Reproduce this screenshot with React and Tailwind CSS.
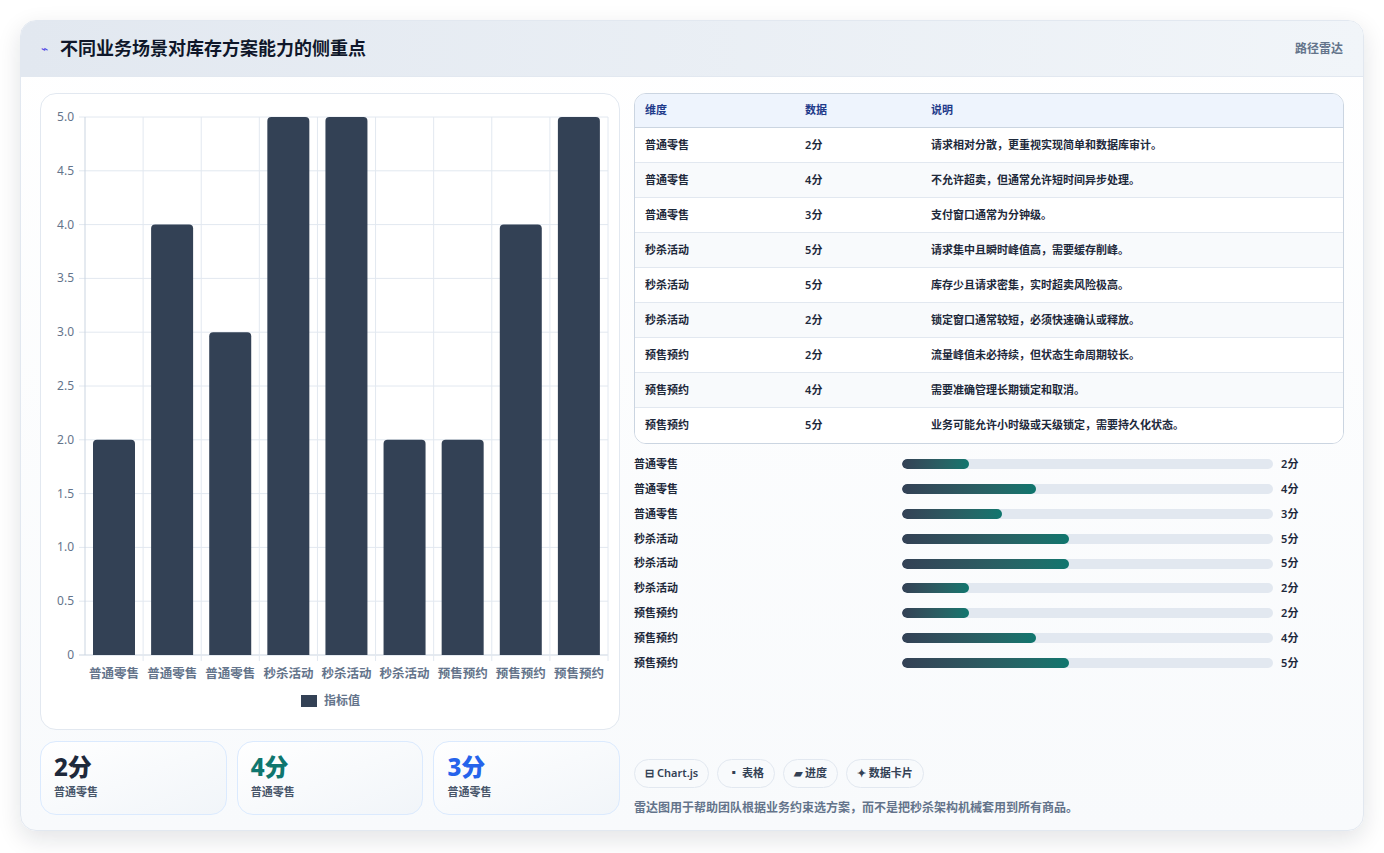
import React from "react";

const rows = [
  ["普通零售", 2, "请求相对分散，更重视实现简单和数据库审计。"],
  ["普通零售", 4, "不允许超卖，但通常允许短时间异步处理。"],
  ["普通零售", 3, "支付窗口通常为分钟级。"],
  ["秒杀活动", 5, "请求集中且瞬时峰值高，需要缓存削峰。"],
  ["秒杀活动", 5, "库存少且请求密集，实时超卖风险极高。"],
  ["秒杀活动", 2, "锁定窗口通常较短，必须快速确认或释放。"],
  ["预售预约", 2, "流量峰值未必持续，但状态生命周期较长。"],
  ["预售预约", 4, "需要准确管理长期锁定和取消。"],
  ["预售预约", 5, "业务可能允许小时级或天级锁定，需要持久化状态。"],
];

const font = { fontFamily: '"Noto Sans", "Noto Sans CJK SC", sans-serif' };

function Chart() {
  const x0 = 44, x1 = 567, yTop = 23, yZero = 561;
  const cw = (x1 - x0) / 9;
  const ticks = [0, 0.5, 1, 1.5, 2, 2.5, 3, 3.5, 4, 4.5, 5];
  return (
    <svg width="578" height="634" viewBox="0 0 578 634" style={font}>
      {ticks.map((t) => {
        const y = yZero - (t / 5) * (yZero - yTop);
        return (
          <g key={t}>
            <line x1={x0 - 6} x2={x1} y1={y} y2={y} stroke={t === 0 ? "#cbd5e1" : "#e2e8f0"} />
            <text x={x0 - 11} y={y + 4} textAnchor="end" fontSize="12" fill="#64748b">
              {t === 0 ? "0" : t.toFixed(1)}
            </text>
          </g>
        );
      })}
      {Array.from({ length: 10 }).map((_, i) => (
        <line key={i} x1={x0 + i * cw} x2={x0 + i * cw} y1={yTop} y2={yZero + (i === 0 ? 0 : 6)} stroke={i === 0 ? "#cbd5e1" : "#e2e8f0"} />
      ))}
      {rows.map((r, i) => {
        const h = (r[1] / 5) * (yZero - yTop);
        const bx = x0 + i * cw + 8;
        return (
          <g key={i}>
            <path d={`M${bx} ${yZero} V${yZero - h + 4} Q${bx} ${yZero - h} ${bx + 4} ${yZero - h} H${bx + 38} Q${bx + 42} ${yZero - h} ${bx + 42} ${yZero - h + 4} V${yZero} Z`} fill="#334155" />
            <text x={x0 + i * cw + cw / 2} y={584} textAnchor="middle" fontSize="12.5" fontWeight="600" fill="#64748b">{r[0]}</text>
          </g>
        );
      })}
      <rect x="260" y="601" width="16" height="12" fill="#334155" />
      <text x="283" y="611" fontSize="12" fontWeight="600" fill="#64748b">指标值</text>
    </svg>
  );
}

export default function App() {
  return (
    <div className="min-h-[853px] bg-white pt-5 px-5" style={font}>
      <div className="w-[1344px] h-[811px] rounded-2xl border border-[#e2e8f0] shadow-[0_8px_24px_rgba(15,23,42,0.12)] bg-gradient-to-b from-white to-[#f8fafc] overflow-hidden flex flex-col">
        <div className="h-[56px] flex items-center justify-between px-5 bg-gradient-to-r from-[#e2e8f0] to-[#f1f5f9] border-b border-[#e2e8f0]">
          <div className="flex items-center gap-3">
            <span className="text-[#4f46e5] text-[12px]">⌁</span>
            <span className="text-[18px] font-bold text-[#0f172a]">不同业务场景对库存方案能力的侧重点</span>
          </div>
          <span className="text-[12px] font-semibold text-[#64748b]">路径雷达</span>
        </div>
        <div className="flex gap-[14px] px-[19px] pt-4">
          <div className="w-[581px] flex flex-col gap-[11px]">
            <div className="h-[637px] rounded-2xl border border-[#e2e8f0] bg-white"><Chart /></div>
            <div className="flex gap-[10px]">
              {[["2分", "text-[#1e293b]"], ["4分", "text-[#0f766e]"], ["3分", "text-[#2563eb]"]].map(([v, c], i) => (
                <div key={i} className="flex-1 h-[74px] rounded-2xl border border-[#dbeafe] bg-gradient-to-br from-white to-[#f1f5f9] px-[13px] pt-[9px]">
                  <div className={`text-[24px] font-extrabold leading-[32px] ${c}`}>{v}</div>
                  <div className="text-[11px] font-semibold text-[#475569] mt-[1px]">普通零售</div>
                </div>
              ))}
            </div>
          </div>
          <div className="w-[711px] flex flex-col">
            <div className="rounded-xl border border-[#cbd5e1] overflow-hidden bg-white">
              <div className="h-[34px] flex items-center bg-[#eef4fd] border-b border-[#cbd5e1] text-[11px] font-bold text-[#1e3a8a]">
                <div className="w-[170px] pl-[10px]">维度</div>
                <div className="w-[126px]">数据</div>
                <div>说明</div>
              </div>
              {rows.map((r, i) => (
                <div key={i} className={`h-[35px] flex items-center text-[11px] font-semibold text-[#1e293b] ${i % 2 ? "bg-[#f8fafc]" : "bg-white"} ${i < 8 ? "border-b border-[#e2e8f0]" : ""}`}>
                  <div className="w-[170px] pl-[10px]">{r[0]}</div>
                  <div className="w-[126px]">{r[1]}分</div>
                  <div>{r[2]}</div>
                </div>
              ))}
            </div>
            <div className="mt-[8px] flex flex-col">
              {rows.map((r, i) => (
                <div key={i} className="h-[24.8px] flex items-center text-[11px] font-semibold text-[#1e293b]">
                  <div className="w-[268px]">{r[0]}</div>
                  <div className="w-[371px] h-[10px] rounded-full bg-[#e2e8f0] overflow-hidden">
                    <div className="h-full rounded-full bg-gradient-to-r from-[#334155] to-[#0f766e]" style={{ width: `${r[1] * 9}%` }} />
                  </div>
                  <div className="ml-2">{r[1]}分</div>
                </div>
              ))}
            </div>
            <div className="mt-[84px] flex gap-[8px]">
              {["⊟ Chart.js", "▪ 表格", "▰ 进度", "✦ 数据卡片"].map((t) => (
                <span key={t} className="h-[29px] px-[10px] flex items-center rounded-full border border-[#e2e8f0] bg-[#f8fafc] text-[11px] font-semibold text-[#334155]">{t}</span>
              ))}
            </div>
            <div className="mt-[11px] text-[12px] font-semibold text-[#64748b]">雷达图用于帮助团队根据业务约束选方案，而不是把秒杀架构机械套用到所有商品。</div>
          </div>
        </div>
      </div>
    </div>
  );
}
